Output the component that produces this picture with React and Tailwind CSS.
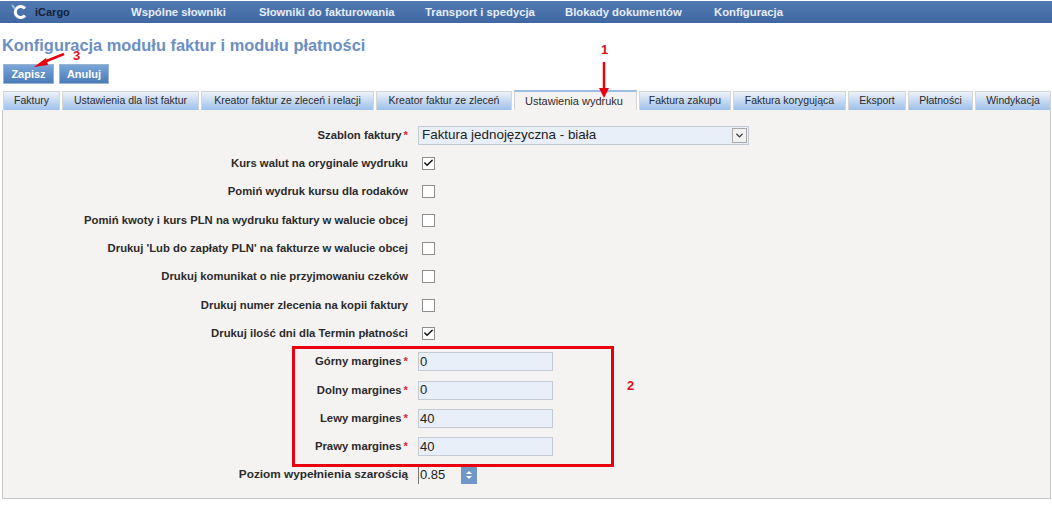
import { ChevronDown, Check } from 'lucide-react';

const nav = [
  ['Wspólne słowniki', 'w-[128px]'],
  ['Słowniki do fakturowania', 'w-[166px]'],
  ['Transport i spedycja', 'w-[140px]'],
  ['Blokady dokumentów', 'w-[149px]'],
  ['Konfiguracja', 'w-[90px]'],
];

const tabs = [
  ['Faktury', 'w-[57px]'],
  ['Ustawienia dla list faktur', 'w-[137px]'],
  ['Kreator faktur ze zleceń i relacji', 'w-[173px]'],
  ['Kreator faktur ze zleceń', 'w-[136px]'],
  ['Ustawienia wydruku', 'w-[123px]', true],
  ['Faktura zakupu', 'w-[92px]'],
  ['Faktura korygująca', 'w-[113px]'],
  ['Eksport', 'w-[58px]'],
  ['Płatności', 'w-[65px]'],
  ['Windykacja', 'w-[76px]'],
];

const checks = [
  ['Kurs walut na oryginale wydruku', true],
  ['Pomiń wydruk kursu dla rodaków', false],
  ['Pomiń kwoty i kurs PLN na wydruku faktury w walucie obcej', false],
  ["Drukuj 'Lub do zapłaty PLN' na fakturze w walucie obcej", false],
  ['Drukuj komunikat o nie przyjmowaniu czeków', false],
  ['Drukuj numer zlecenia na kopii faktury', false],
  ['Drukuj ilość dni dla Termin płatności', true],
];

const margins = [
  ['Górny margines', '0'],
  ['Dolny margines', '0'],
  ['Lewy margines', '40'],
  ['Prawy margines', '40'],
];

function Row({ label, required, size = 'text-[11.3px]', children }) {
  return (
    <div className="flex h-[28.33px] items-center">
      <div className={`w-[405px] shrink-0 text-right font-bold text-[#2b2b2b] ${size}`}>
        {label}
        {required && <span className="ml-[2px] text-[#d9263a]">*</span>}
      </div>
      <div className="ml-[10px] flex items-center">{children}</div>
    </div>
  );
}

function Box({ checked }) {
  return (
    <span className="ml-[4px] flex h-[13px] w-[13px] items-center justify-center border border-[#8e8e8e] bg-white">
      {checked && <Check size={12} strokeWidth={3.5} className="text-[#1a1a1a]" />}
    </span>
  );
}

function Field({ value }) {
  return (
    <div className="flex h-[19px] w-[135px] items-center border border-[#c3cad3] bg-[#e9eff8] pl-[1px] text-[13px] text-[#222]">
      {value}
    </div>
  );
}

export default function App() {
  return (
    <div className="relative h-[506px] w-[1052px] overflow-hidden bg-white font-['Liberation_Sans',Arial,sans-serif]">
      <header className="mt-[1px] flex h-[22px] items-center bg-gradient-to-b from-[#5279b0] to-[#3f68a3] pl-[11px]">
        <svg width="16" height="16" viewBox="0 0 16 16" className="shrink-0">
          <path d="M14 4.5 A5.5 5.5 0 1 0 14 11.5" fill="none" stroke="#fff" strokeWidth="3" />
          <path d="M1 1 L4 5" stroke="#8fc5e8" strokeWidth="2" />
        </svg>
        <span className="ml-[8px] w-[96px] text-[11px] font-bold text-[#14233a]">iCargo</span>
        <nav className="flex">
          {nav.map(([name, w]) => (
            <span key={name} className={`${w} text-[11.3px] font-bold text-[#e6edf7]`}>{name}</span>
          ))}
        </nav>
      </header>

      <h1 className="ml-[2px] mt-[12px] h-[20px] text-[16.4px] leading-[20px] font-bold text-[#6b8fc4]">
        Konfiguracja modułu faktur i modułu płatności
      </h1>

      <div className="ml-[3px] mt-[9px] flex gap-[5px]">
        <button className="h-[20px] w-[51px] border border-[#9cb3cf] bg-gradient-to-b from-[#7aa5d8] to-[#4a7cb8] text-[11px] font-bold text-white">Zapisz</button>
        <button className="h-[20px] w-[50px] border border-[#9cb3cf] bg-gradient-to-b from-[#7aa5d8] to-[#4a7cb8] text-[11px] font-bold text-white">Anuluj</button>
      </div>

      <div className="ml-[3px] mt-[6px] flex h-[20px] w-[1049px] items-end gap-[2px]">
        {tabs.map(([name, w, active]) => (
          <div
            key={name}
            className={`${w} flex shrink-0 items-center justify-center border border-b-0 border-[#d5d5d5] text-[#2b2b2b] ${
              active
                ? 'h-[20px] border-t-2 border-t-[#9dbde6] bg-[#f5f3f2] pr-[3px] text-[11px]'
                : 'h-[19px] bg-gradient-to-b from-[#eef2f8] to-[#9fc0ea] text-[10.5px]'
            }`}
          >
            {name}
          </div>
        ))}
      </div>

      <main className="ml-[2px] h-[389px] w-[1049px] border-b border-l border-r border-[#c8c8c8] bg-[#f5f3f2] pt-[11px]">
        <Row label="Szablon faktury" required>
          <div className="flex h-[19px] w-[331px] items-center justify-between border border-[#c3cad3] bg-[#e9eff8] pl-[3px] text-[13.4px] text-[#222]">
            Faktura jednojęzyczna - biała
            <span className="mr-[1px] flex h-[15px] w-[15px] items-center justify-center border border-[#a8a8a8] bg-[#f2f2f2]">
              <ChevronDown size={11} strokeWidth={3} className="text-[#333]" />
            </span>
          </div>
        </Row>
        {checks.map(([label, on]) => (
          <Row key={label} label={label}>
            <Box checked={on} />
          </Row>
        ))}
        {margins.map(([label, value]) => (
          <Row key={label} label={label} required>
            <Field value={value} />
          </Row>
        ))}
        <Row label="Poziom wypełnienia szarością" size="text-[11.8px]">
          <div className="flex h-[17px] w-[59px] items-center border-l border-[#777] pl-[1px] text-[13px] text-[#222]">
            <span className="flex-1">0.85</span>
            <span className="flex h-[17px] w-[16px] flex-col items-center justify-center gap-[2px] bg-[#6f97c8]">
              <span className="h-0 w-0 border-x-[3px] border-b-[3px] border-x-transparent border-b-white" />
              <span className="h-0 w-0 border-x-[3px] border-t-[3px] border-x-transparent border-t-white" />
            </span>
          </div>
        </Row>
      </main>

      {/* annotations */}
      <div className="absolute left-[292px] top-[346px] h-[121px] w-[322px] border-[3px] border-[#e8000f]" />
      <span className="absolute left-[73px] top-[46px] text-[13px] font-bold text-[#e01020]">3</span>
      <span className="absolute left-[601px] top-[40px] text-[13px] font-bold text-[#e01020]">1</span>
      <span className="absolute left-[627px] top-[376px] text-[13px] font-bold text-[#e01020]">2</span>
      <svg className="absolute left-0 top-0 pointer-events-none" width="1052" height="506">
        <path d="M64 54 L44 62" stroke="#e8000f" strokeWidth="2.5" />
        <path d="M34 67 L46 58 L48 65 Z" fill="#e8000f" />
        <path d="M604 62 L604 90" stroke="#e8000f" strokeWidth="2.5" />
        <path d="M599 88 L609 88 L604 98 Z" fill="#e8000f" />
      </svg>
    </div>
  );
}
